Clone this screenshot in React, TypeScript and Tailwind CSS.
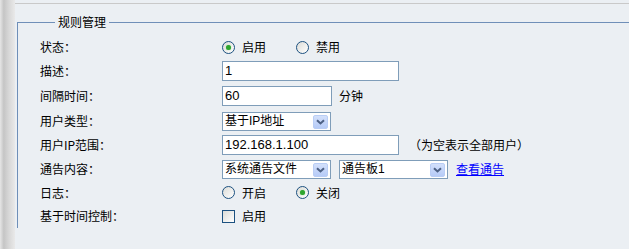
const cjk = { fontFamily: '"Noto Sans CJK SC", "Liberation Sans", sans-serif' };
const field = { fontFamily: '"Liberation Sans", "Noto Sans CJK SC", sans-serif' };

function Radio({ checked, label }: { checked?: boolean; label: string }) {
  return (
    <div className="flex w-[74px] items-center">
      <span className="flex h-[13px] w-[13px] items-center justify-center rounded-full border border-[#1c5180] bg-[linear-gradient(135deg,#dcdcd7,#ffffff)]">
        {checked && <span className="h-[5px] w-[5px] rounded-full bg-[#2fa52f] shadow-[0_0_1px_#6fd36f]" />}
      </span>
      <span className="ml-[7px]">{label}</span>
    </div>
  );
}

function Arrow() {
  return (
    <span className="absolute right-[2px] top-[2px] flex h-[14px] w-[15px] items-center justify-center rounded-[2px] border border-[#b9cdf5] bg-[linear-gradient(#d3e0fb,#b6cbf7)]">
      <svg width="9" height="6" viewBox="0 0 9 6">
        <path d="M1 1.2 L4.5 4.5 L8 1.2" fill="none" stroke="#4d6185" strokeWidth="2" />
      </svg>
    </span>
  );
}

function Select({ value, w }: { value: string; w: string }) {
  return (
    <div className={`relative h-[19px] ${w} border border-[#7f9db9] bg-white pl-[2px] text-[12px] leading-[17px]`} style={field}>
      {value}
      <Arrow />
    </div>
  );
}

function Input({ value, w }: { value: string; w: string }) {
  return (
    <div className={`h-[20px] ${w} border border-[#7f9db9] bg-white pl-[2px] text-[13px] leading-[18px]`} style={field}>
      {value}
    </div>
  );
}

function Row({ label, h, children }: { label: string; h: string; children: React.ReactNode }) {
  return (
    <div className={`flex ${h} items-center`}>
      <div className="w-[182px]">{label}</div>
      <div className="flex items-center">{children}</div>
    </div>
  );
}

export default function App() {
  return (
    <div className="flex h-[249px] w-[629px] overflow-hidden bg-[#ebeff3] text-[12px] text-black" style={cjk}>
      <div className="w-[15px] shrink-0 bg-[linear-gradient(to_right,#e6e6e6,#c5c5c5_25%,#d8d8d8_60%,#e9e9e9)]" />
      <div className="flex-1">
        <div className="mt-[3px] border-t border-[#c9c9c9]" />
        <fieldset className="ml-[2px] mt-[10px] border-l border-t border-[#6f8fb8] pl-[22px] pt-[5px]">
          <legend className="ml-[15px] px-[3px] text-[12px] leading-[16px]">规则管理</legend>
          <Row label="状态：" h="h-[24px]">
            <Radio checked label="启用" />
            <Radio label="禁用" />
          </Row>
          <Row label="描述：" h="h-[24px]">
            <Input value="1" w="w-[177px]" />
          </Row>
          <Row label="间隔时间：" h="h-[26px]">
            <Input value="60" w="w-[110px]" />
            <span className="ml-[7px]">分钟</span>
          </Row>
          <Row label="用户类型：" h="h-[24px]">
            <Select value="基于IP地址" w="w-[109px]" />
          </Row>
          <Row label="用户IP范围：" h="h-[24px]">
            <Input value="192.168.1.100" w="w-[177px]" />
            <span className="ml-[10px]">（为空表示全部用户）</span>
          </Row>
          <Row label="通告内容：" h="h-[24px]">
            <Select value="系统通告文件" w="w-[109px]" />
            <div className="ml-[8px]">
              <Select value="通告板1" w="w-[109px]" />
            </div>
            <a href="#" className="ml-[8px] text-[#0000ff] underline">查看通告</a>
          </Row>
          <Row label="日志：" h="h-[23px]">
            <Radio label="开启" />
            <Radio checked label="关闭" />
          </Row>
          <Row label="基于时间控制：" h="h-[24px]">
            <span className="h-[13px] w-[13px] border border-[#1c5180] bg-[linear-gradient(135deg,#dcdcd7,#ffffff)]" />
            <span className="ml-[7px]">启用</span>
          </Row>
        </fieldset>
      </div>
    </div>
  );
}
